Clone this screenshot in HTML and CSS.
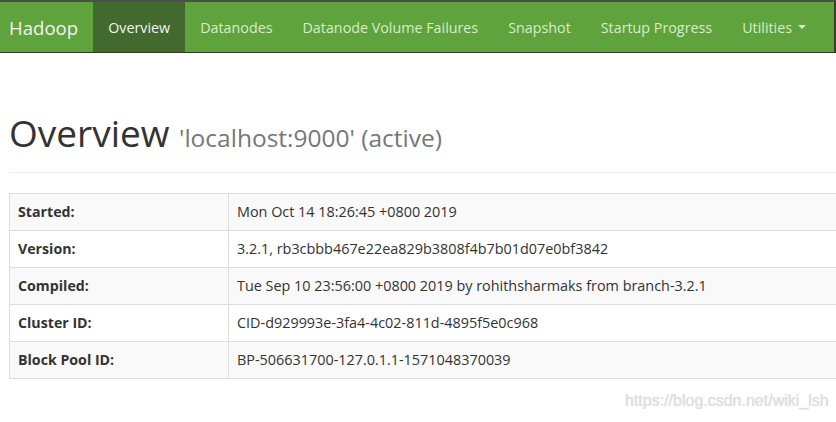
FILE: index.html
```html
<!DOCTYPE html>
<html>
<head>
<meta charset="utf-8">
<link rel="stylesheet" href="styles.css">
</head>
<body>
<nav class="navbar">
  <span class="brand">Hadoop</span>
  <ul class="nav">
    <li class="active">Overview</li>
    <li>Datanodes</li>
    <li>Datanode Volume Failures</li>
    <li>Snapshot</li>
    <li>Startup Progress</li>
    <li>Utilities <span class="caret"></span></li>
  </ul>
</nav>
<main class="container">
  <div class="page-header">
    <h1>Overview <small>'localhost:9000' (active)</small></h1>
  </div>
  <table class="info">
    <tr><th>Started:</th><td>Mon Oct 14 18:26:45 +0800 2019</td></tr>
    <tr><th>Version:</th><td>3.2.1, rb3cbbb467e22ea829b3808f4b7b01d07e0bf3842</td></tr>
    <tr><th>Compiled:</th><td>Tue Sep 10 23:56:00 +0800 2019 by rohithsharmaks from branch-3.2.1</td></tr>
    <tr><th>Cluster ID:</th><td>CID-d929993e-3fa4-4c02-811d-4895f5e0c968</td></tr>
    <tr><th>Block Pool ID:</th><td>BP-506631700-127.0.1.1-1571048370039</td></tr>
  </table>
</main>
<div class="watermark">https://blog.csdn.net/wiki_lsh</div>
</body>
</html>
```

FILE: styles.css
```css
html, body {
  margin: 0;
  padding: 0;
  background: #fff;
  font-family: "Open Sans", "Noto Sans", sans-serif;
  font-size: 14px;
  color: #333;
  overflow: hidden;
}

.navbar {
  display: flex;
  align-items: stretch;
  height: 50px;
  background: #5fa33d;
  border-top: 2px solid #4d4d4d;
  border-bottom: 1px solid #2f3b28;
  border-right: 2px solid #3a3a3a;
}

.brand {
  display: flex;
  align-items: center;
  padding: 0 15px 0 9px;
  font-size: 18.6px;
  color: #f2f2f2;
}

.nav {
  display: flex;
  margin: 0;
  padding: 0;
  list-style: none;
}

.nav li {
  display: flex;
  align-items: center;
  padding: 0 15px;
  color: #d8ecc9;
  font-size: 14.3px;
}

.nav li.active {
  background: #42692e;
  color: #f4f4f4;
}

.caret {
  display: inline-block;
  width: 0;
  height: 0;
  margin-left: 6px;
  border-top: 4px solid #d8ecc9;
  border-left: 4px solid transparent;
  border-right: 4px solid transparent;
}

.container {
  padding: 0 0 0 9px;
}

.page-header {
  margin-top: 60px;
  padding-bottom: 18px;
  border-bottom: 1px solid #eee;
  margin-bottom: 20px;
}

h1 {
  margin: 0;
  font-size: 37px;
  font-weight: 400;
  line-height: 1.1;
  color: #333;
}

h1 small {
  font-size: 24.5px;
  color: #777;
}

.info {
  width: 900px;
  border-collapse: collapse;
  border: 1px solid #ddd;
}

.info th,
.info td {
  height: 20px;
  padding: 8px;
  border: 1px solid #ddd;
  text-align: left;
  line-height: 20px;
}

.info th {
  width: 202px;
  font-weight: 700;
  font-size: 14.2px;
}

.info td {
  font-weight: 400;
  font-size: 14.4px;
}

.info tr:nth-child(odd) {
  background: #f9f9f9;
}

.watermark {
  position: absolute;
  left: 625px;
  top: 392px;
  font-family: "Liberation Sans", sans-serif;
  font-size: 16px;
  color: #e2e2e2;
  text-shadow: 0 0 1px #d0d0d0;
}
```
